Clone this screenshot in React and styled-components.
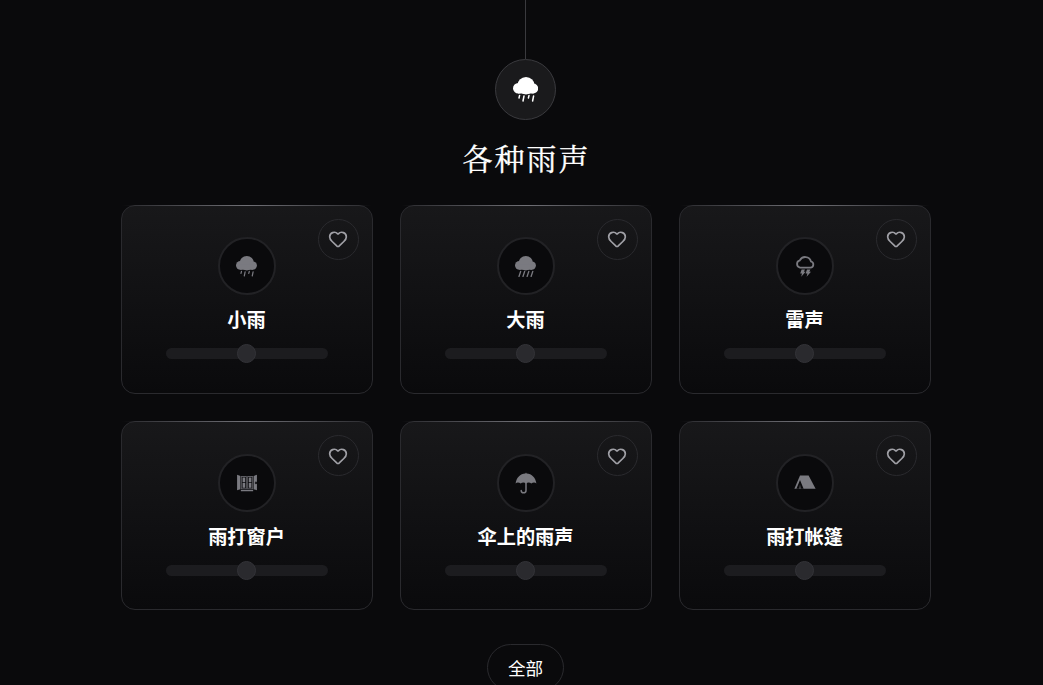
import React from 'react';
import styled, { createGlobalStyle } from 'styled-components';
import { Heart } from 'lucide-react';
import { GiWindow } from 'react-icons/gi';

// cloud made of three lobes and a flat base, drops drawn under it
const CloudBody = () => (
  <g fill="currentColor">
    <circle cx="5.3" cy="11.2" r="5.3" />
    <circle cx="13" cy="8.7" r="8.7" />
    <circle cx="20.2" cy="11.5" r="5" />
    <rect x="5" y="10" width="15.5" height="6.5" />
  </g>
);

const DrizzleIcon = ({ size = 21 }) => (
  <svg width={size} height={size} viewBox="0 0 25.3 25.3">
    <CloudBody />
    <g stroke="currentColor" strokeWidth="1.5" strokeLinecap="round">
      <path d="M6.6 18.4 L6 21" />
      <path d="M11 19 L10 24" />
      <path d="M16 18.4 L15.4 21" />
      <path d="M20.6 19 L19.6 24" />
    </g>
  </svg>
);

const HeavyRainIcon = ({ size = 21 }) => (
  <svg width={size} height={size} viewBox="0 0 25.3 25.3">
    <CloudBody />
    <g stroke="currentColor" strokeWidth="1.6" strokeLinecap="round">
      <path d="M6.8 18.6 L4.8 24.6" />
      <path d="M11.6 18.6 L9.6 24.6" />
      <path d="M16.6 18.6 L14.6 24.6" />
      <path d="M21.4 18.6 L19.4 24.6" />
    </g>
  </svg>
);

const ThunderIcon = ({ size = 22 }) => (
  <svg width={size} height={size} viewBox="0 0 22 22">
    <path
      d="M6 12.6 H16.4 A3.1 3.1 0 0 0 17 6.5 A6 6 0 0 0 5.8 5.4 A3.7 3.7 0 0 0 6 12.6 Z"
      fill="none"
      stroke="currentColor"
      strokeWidth="1.8"
    />
    <g fill="currentColor">
      <path d="M7.6 14.6 H11 L9.9 16.8 H11.6 L7.2 21.8 L8 18.6 H6.2 Z" />
      <path d="M13 14.6 H16.4 L15.3 16.8 H17 L12.6 21.8 L13.4 18.6 H11.6 Z" />
    </g>
  </svg>
);

const UmbrellaIcon = ({ size = 22 }) => (
  <svg width={size} height={size} viewBox="0 0 22 22">
    <path
      d="M11 0.4 L11.6 1.4 C16.8 1.7 20.6 5.6 21.4 11.4 C20 10.2 18 10.2 16.3 11.6 C14.9 10.3 13 10.1 11 11.4 C9 10.1 7.1 10.3 5.7 11.6 C4 10.2 2 10.2 0.6 11.4 C1.4 5.6 5.2 1.7 10.4 1.4 Z"
      fill="currentColor"
    />
    <path
      d="M11 10.5 V18.4 A2.4 2.4 0 0 1 6.2 18.4"
      fill="none"
      stroke="currentColor"
      strokeWidth="1.5"
      strokeLinecap="round"
    />
  </svg>
);

const TentIcon = ({ size = 22 }) => (
  <svg width={size} height={size} viewBox="0 0 22 22">
    <path d="M6 3.4 H14.6 L21.6 16.8 H0.4 Z" fill="currentColor" />
    <path d="M6 8 L2.4 16.8 H5.4 L6 12.4 L6.6 16.8 H9.6 Z" fill="#0a0a0c" />
  </svg>
);

const sounds = [
  { name: '小雨', Icon: DrizzleIcon, size: 21 },
  { name: '大雨', Icon: HeavyRainIcon, size: 21 },
  { name: '雷声', Icon: ThunderIcon, size: 22 },
  { name: '雨打窗户', Icon: GiWindow, size: 22 },
  { name: '伞上的雨声', Icon: UmbrellaIcon, size: 22 },
  { name: '雨打帐篷', Icon: TentIcon, size: 22 },
];

const App = () => {
  return (
    <Page>
      <GlobalStyle />
      <Line />
      <HeroIcon>
        <DrizzleIcon size={25.3} />
      </HeroIcon>
      <Title>各种雨声</Title>
      <Grid>
        {sounds.map(({ name, Icon, size }) => (
          <Card key={name}>
            <LikeBtn>
              <Heart size={20} />
            </LikeBtn>
            <IconCircle>
              <Icon size={size} />
            </IconCircle>
            <CardTitle>{name}</CardTitle>
            <Track>
              <Thumb />
            </Track>
          </Card>
        ))}
      </Grid>
      <AllBtn>全部</AllBtn>
    </Page>
  );
};

const GlobalStyle = createGlobalStyle`
  html, body {
    margin: 0;
    padding: 0;
    background: #0a0a0c;
  }
`;

const Page = styled.div`
  display: flex;
  flex-direction: column;
  align-items: center;
  box-sizing: border-box;
  height: 100vh;
  overflow: hidden;
  padding-left: 8px;
  background: #0a0a0c;
  color: #fff;
  font-family: 'Noto Sans CJK SC', sans-serif;
`;

const Line = styled.div`
  flex: none;
  width: 1px;
  height: 59px;
  background: #3a3a3e;
`;

const HeroIcon = styled.div`
  flex: none;
  display: flex;
  align-items: center;
  justify-content: center;
  box-sizing: border-box;
  width: 61px;
  height: 61px;
  border: 1px solid #3a3a3e;
  border-radius: 50%;
  background: #1a1a1c;
  color: #fff;
`;

const Title = styled.h1`
  flex: none;
  margin: 20px 0 24.9px;
  padding-left: 2px;
  font-family: 'Liberation Serif', 'Noto Serif CJK SC', serif;
  font-size: 30px;
  font-weight: 400;
  line-height: 40px;
  letter-spacing: 2px;
  -webkit-text-stroke: 0.3px #fff;
`;

const Grid = styled.div`
  flex: none;
  display: grid;
  grid-template-columns: repeat(3, 252px);
  gap: 27.6px 27px;
  width: 810px;
`;

const Card = styled.div`
  position: relative;
  display: flex;
  flex-direction: column;
  align-items: center;
  box-sizing: border-box;
  height: 188.8px;
  padding-top: 31.4px;
  border: 1px solid #2a2a2e;
  border-radius: 14px;
  background: linear-gradient(180deg, #18181a 0%, #0a0a0c 100%);

  &::before {
    content: '';
    position: absolute;
    top: -1px;
    left: 0;
    right: 0;
    height: 1px;
    background: linear-gradient(90deg, transparent, #707076, transparent);
  }
`;

const LikeBtn = styled.button`
  position: absolute;
  top: 13px;
  right: 13px;
  display: flex;
  align-items: center;
  justify-content: center;
  box-sizing: border-box;
  width: 41px;
  height: 41px;
  padding: 0;
  border: 1px solid #2a2a2e;
  border-radius: 50%;
  background: transparent;
  color: #a0a0a6;
`;

const IconCircle = styled.div`
  display: flex;
  align-items: center;
  justify-content: center;
  box-sizing: border-box;
  width: 58px;
  height: 58px;
  border: 2px solid #222225;
  border-radius: 50%;
  background: #0a0a0c;
  color: #7a7a80;
`;

const CardTitle = styled.div`
  margin-top: 10px;
  font-size: 19.2px;
  font-weight: 700;
  line-height: 28px;
  color: #fff;
`;

const Track = styled.div`
  position: relative;
  width: 162px;
  height: 11px;
  margin-top: 15px;
  border-radius: 6px;
  background: #1c1c1f;
`;

const Thumb = styled.div`
  position: absolute;
  top: -4px;
  left: calc(50% - 9.5px);
  box-sizing: border-box;
  width: 19px;
  height: 19px;
  border: 1px solid #333338;
  border-radius: 50%;
  background: #2a2a2e;
`;

const AllBtn = styled.button`
  flex: none;
  box-sizing: border-box;
  width: 77px;
  height: 47px;
  margin-top: 34px;
  padding: 0;
  border: 1px solid #2a2a2e;
  border-radius: 25px;
  background: transparent;
  color: #fff;
  font-family: 'Noto Sans CJK SC', sans-serif;
  font-size: 17.6px;
`;

export default App;
